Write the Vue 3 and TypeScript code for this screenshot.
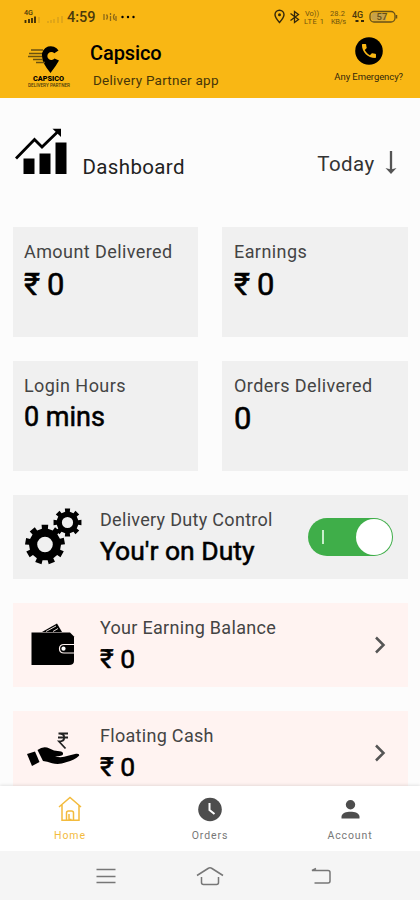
<script setup lang="ts">
interface Stat {
  label: string
  value: string
  kind: string
}

const stats: Stat[] = [
  { label: 'Amount Delivered', value: '₹ 0', kind: 'amount' },
  { label: 'Earnings', value: '₹ 0', kind: 'earnings' },
  { label: 'Login Hours', value: '0 mins', kind: 'login' },
  { label: 'Orders Delivered', value: '0', kind: 'orders' },
]

function gearPath(cx: number, cy: number, outer: number, inner: number, hole: number, teeth: number, phase: number): string {
  const step = (Math.PI * 2) / teeth
  const points: string[] = []
  for (let i = 0; i < teeth; i++) {
    const a = phase + i * step
    const corners: [number, number][] = [
      [inner, -0.27],
      [outer, -0.24],
      [outer, 0.24],
      [inner, 0.27],
    ]
    for (const [r, k] of corners) {
      const t = a + k * step
      points.push(`${(cx + r * Math.cos(t)).toFixed(2)} ${(cy + r * Math.sin(t)).toFixed(2)}`)
    }
  }
  return `M${points.join('L')}ZM${cx - hole} ${cy}a${hole} ${hole} 0 1 0 ${hole * 2} 0a${hole} ${hole} 0 1 0 ${-hole * 2} 0Z`
}

const bigGear = gearPath(21, 36.5, 20, 16, 7.8, 9, -0.18)
const smallGear = gearPath(43.5, 14.5, 14.2, 11, 5.6, 8, 0)
</script>

<template>
  <div class="screen">
    <header class="header">
      <div class="status">
        <div class="status-left">
          <svg class="signal" width="42" height="16" viewBox="0 0 42 16">
            <text x="0" y="6" class="tiny" textLength="9" lengthAdjust="spacingAndGlyphs">4G</text>
            <path d="M1.500 11v3M5 10v4M8 9v5M11 7.500v6.500" stroke="#3b2c08" stroke-width="1.800" />
            <path d="M15 8v6M24 12v2M27 11v3M30 10v4M34 8v6M38 7v7" stroke="#a98124" stroke-width="1" opacity=".6" />
          </svg>
          <span class="clock">4:59</span>
          <svg class="vibes" width="36" height="12" viewBox="0 0 36 12">
            <path d="M2 3v6M4.500 3.500q2 2.500 0 5M8.500 2v2M8.500 5v5M12.500 3q-2 3 0 6M14 5v5" stroke="#8c6818" stroke-width="1.300" fill="none" />
            <circle cx="20.500" cy="6" r="1.200" /><circle cx="26" cy="6" r="1.200" /><circle cx="31.500" cy="6" r="1.200" />
          </svg>
        </div>
        <svg class="status-right" width="126" height="18" viewBox="0 0 126 18">
          <path d="M6.500 14.500Q2 9.500 2 6.800a4.500 4.500 0 0 1 9 0Q11 9.500 6.500 14.500Z" fill="none" stroke="#33270b" stroke-width="1.400" />
          <circle cx="6.500" cy="6.700" r="1.500" fill="#33270b" />
          <path d="M17.500 5.500l8 6-4 3V3.500l4 3-8 6" fill="none" stroke="#33270b" stroke-width="1.300" />
          <text x="32" y="8" class="micro" textLength="14">Vo))</text>
          <text x="31" y="15.500" class="micro" textLength="20">LTE 1</text>
          <text x="57" y="8" class="micro" textLength="15">28.2</text>
          <text x="58" y="15.500" class="micro" textLength="15">KB/s</text>
          <text x="79" y="9.500" class="four">4G</text>
          <path d="M82.500 13h3M88 13h3" stroke="#33270b" stroke-width="1.800" />
          <rect x="97" y="3.500" width="25" height="10.500" rx="4" fill="none" stroke="#665018" stroke-width="1.300" />
          <path d="M100 5h13v7.500h-13q-2-1-2-3.700t2-3.800" fill="#c6a14a" />
          <path d="M123.500 7v3.500" stroke="#665018" stroke-width="1.500" />
          <text x="103.500" y="12" class="battery">57</text>
        </svg>
      </div>
      <div class="brand-row">
        <svg class="logo" width="44" height="43" viewBox="0 0 44 43">
          <path d="M22.500 28Q14 18 14 11A8.900 8.900 0 0 1 30.500 5.500L26.300 8.300A4 4 0 1 0 26.500 13.500L31 15.500Q28 21 22.500 28Z" />
          <path d="M3 5h12M1 8.500h13M0 11.500h14M5 14.500h10M8 17.500h9" stroke="#6b520f" stroke-width="1.300" />
          <text x="5" y="36.300" class="logo-name" textLength="31" lengthAdjust="spacingAndGlyphs">CAPSICO</text>
          <text x="0" y="41.500" class="logo-sub" textLength="42" lengthAdjust="spacingAndGlyphs">DELIVERY PARTNER</text>
        </svg>
        <div class="brand">
          <h1>Capsico</h1>
          <p>Delivery Partner app</p>
        </div>
        <div class="emergency">
          <svg width="28" height="28" viewBox="0 0 28 28">
            <circle cx="14" cy="14" r="13.800" />
            <path transform="translate(4.600 4.600) scale(.78)" fill="#f9b714" d="M6.620 10.790c1.440 2.830 3.760 5.140 6.590 6.590l2.200-2.200c.27-.27.67-.36 1.020-.24 1.120.37 2.330.57 3.570.57.550 0 1 .45 1 1V20c0 .55-.45 1-1 1C10.610 21 3 13.390 3 4c0-.55.45-1 1-1h3.500c.55 0 1 .45 1 1 0 1.250.2 2.450.57 3.570.11.350.03.740-.25 1.020z" />
          </svg>
          <span>Any Emergency?</span>
        </div>
      </div>
    </header>

    <main class="content">
      <section class="dash-head">
        <svg width="53" height="48" viewBox="0 0 53 48">
          <path d="M8.500 30.500h11V46h-11zM24.500 25.500h11V46h-11zM40.500 14.500H51.500V46h-11z" />
          <path d="M1 30.500L19.500 11.500l7.500 7.500L43 3.500" fill="none" stroke="#000" stroke-width="2.800" />
          <path d="M37.500 .8h8.500V9z" />
        </svg>
        <h2>Dashboard</h2>
        <div class="range">
          <span>Today</span>
          <svg width="12" height="24" viewBox="0 0 12 24">
            <path d="M6 0v20" stroke="#555" stroke-width="2.300" />
            <path d="M.5 17L6 18.500l5.500-1.500L6 23z" fill="#555" />
          </svg>
        </div>
      </section>

      <section class="stats">
        <article v-for="stat in stats" :key="stat.kind" class="stat" :class="stat.kind">
          <span class="label">{{ stat.label }}</span>
          <strong>{{ stat.value }}</strong>
        </article>
      </section>

      <section class="row duty">
        <svg class="row-icon" width="59" height="58" viewBox="0 0 59 58">
          <path :d="bigGear" fill-rule="evenodd" />
          <path :d="smallGear" fill-rule="evenodd" />
        </svg>
        <div class="row-text">
          <span class="label">Delivery Duty Control</span>
          <strong>You'r on Duty</strong>
        </div>
        <div class="toggle"><i></i><b></b></div>
      </section>

      <section class="row money">
        <svg class="row-icon" width="59" height="58" viewBox="0 0 59 58">
          <path d="M18 16l15-8.500 5 8.500z" />
          <path d="M22 15.500l10-5.500M29 15.500l5-3" stroke="#fff3f1" stroke-width=".9" />
          <path d="M7.500 16.500H46l4 4V45q0 4-5 4H7.500z" />
          <path d="M50 28.500H40q-4.500 0-4.500 4.200t4.500 4.300h10" fill="#000" stroke="#fff3f1" stroke-width="1.200" />
          <circle cx="39.500" cy="32.700" r="2.100" fill="#fff" />
        </svg>
        <div class="row-text">
          <span class="label">Your Earning Balance</span>
          <strong>₹ 0</strong>
        </div>
        <svg class="chevron" width="12" height="18" viewBox="0 0 12 18"><path d="M2 1.500L9.500 9 2 16.500" /></svg>
      </section>

      <section class="row money cash">
        <svg class="row-icon" width="59" height="58" viewBox="0 0 59 58">
          <path d="M3 30l8-2.500 4.500 10.500-7.500 4z" />
          <path d="M13.500 26q6-4.500 12-1.500 4 2.500 10 2.800 4 .3 3.500 3-.5 2-8 2 6 2 13-.5l8-2q4-.3 3 2-4 4-13 6.500-7 3-14 1-5-2-9-2.200z" />
          <path d="M34.500 9.500h9.500M34 13.500h10M35 9.500c7 0 7 8 0 8l6.500 7" fill="none" stroke="#222" stroke-width="1.800" />
        </svg>
        <div class="row-text">
          <span class="label">Floating Cash</span>
          <strong>₹ 0</strong>
        </div>
        <svg class="chevron" width="12" height="18" viewBox="0 0 12 18"><path d="M2 1.500L9.500 9 2 16.500" /></svg>
      </section>
    </main>

    <nav class="tabs">
      <a class="tab active">
        <svg width="26" height="26" viewBox="0 0 26 26" fill="none" stroke="#f3bb3d" stroke-width="1.500">
          <path d="M2 11L13 1.500 24 11M5 9v15.200h16.500M22 9v16M9.500 24v-7q0-2 2-2h3q2 0 2 2v7M12 18v5.500h2.500" />
        </svg>
        <span>Home</span>
      </a>
      <a class="tab">
        <svg width="26" height="26" viewBox="0 0 26 26">
          <circle cx="13" cy="13.500" r="11.800" fill="#4d4d4d" />
          <path d="M12.500 7v7l5 4" fill="none" stroke="#fff" stroke-width="2" />
        </svg>
        <span>Orders</span>
      </a>
      <a class="tab">
        <svg width="26" height="26" viewBox="0 0 26 26" fill="#4d4d4d">
          <circle cx="13.500" cy="8.800" r="4.700" />
          <path d="M4.500 22.500v-1.800c0-3.700 5-5 9-5s9 1.300 9 5v1.800z" />
        </svg>
        <span>Account</span>
      </a>
    </nav>

    <footer class="system">
      <svg width="20" height="20" viewBox="0 0 20 20"><path d="M.5 3.500h19M.5 10.500h19M.5 16.500h19" /></svg>
      <svg class="sys-home" width="28" height="20" viewBox="0 0 28 20"><path d="M1 9.500L12 2.500q2-1.300 4 0l11 7M5.500 11v5.500q0 2 2 2h13q2 0 2-2V11" /></svg>
      <svg width="20" height="20" viewBox="0 0 20 20"><path d="M1 4.500H17q2 0 2 2v8.500q0 2-2 2H3.500M5 2.500L1 4.500h4" /></svg>
    </footer>
  </div>
</template>

<style>
body {
  margin: 0;
}
</style>

<style scoped>
.screen {
  width: 420px;
  height: 900px;
  display: flex;
  flex-direction: column;
  overflow: hidden;
  background: #fcfcfc;
  color: #000;
  font-family: Roboto, "Liberation Sans", sans-serif;
}
svg {
  display: block;
  flex: none;
}
h1, h2, p {
  margin: 0;
  white-space: nowrap;
}
.header {
  height: 98px;
  flex: none;
  background: #f9b714;
}
.status {
  height: 34px;
  box-sizing: border-box;
  padding: 8px 21px 0 24px;
  display: flex;
  justify-content: space-between;
}
.status-left {
  display: flex;
}
.signal {
  margin-top: 1px;
}
.tiny {
  font-size: 6.5px;
  font-weight: 500;
  fill: #4b390c;
}
.clock {
  width: 34px;
  margin-left: 1px;
  font-size: 14.5px;
  line-height: 20px;
  font-weight: 500;
  color: #4b390c;
}
.vibes {
  margin: 3px 0 0 1px;
}
.micro {
  font-size: 7.5px;
  fill: #70530e;
}
.four {
  font-size: 9px;
  font-weight: 500;
  fill: #4b390c;
}
.battery {
  font-size: 9.5px;
  font-weight: 500;
  fill: #665018;
}
.brand-row {
  display: flex;
  padding: 10px 17px 0 28px;
}
.logo {
  margin-top: 1px;
}
.logo-name {
  font-size: 7px;
  font-weight: 900;
}
.logo-sub {
  font-size: 4.5px;
  font-weight: 500;
  fill: #4b390c;
}
.brand {
  padding-left: 18px;
}
h1 {
  font-size: 20px;
  font-weight: 500;
  line-height: 24px;
  margin-top: -3px;
  letter-spacing: -.1px;
}
.brand p {
  margin: 6px 0 0 3px;
  font-size: 13.5px;
  line-height: 18px;
  color: #463509;
  letter-spacing: .25px;
}
.emergency {
  margin: -7px 0 0 auto;
  display: flex;
  flex-direction: column;
  align-items: center;
  gap: 6px;
}
.emergency span {
  font-size: 9.5px;
  line-height: 12px;
  letter-spacing: -.08px;
  color: #33270b;
}
.content {
  flex: 1;
  min-height: 0;
  overflow: hidden;
  padding: 0 12px 0 13px;
}
.dash-head {
  height: 129px;
  box-sizing: border-box;
  padding: 30px 11px 0 2px;
  display: flex;
}
h2 {
  margin: 26px 0 0 14.5px;
  font-size: 20.5px;
  line-height: 26px;
  font-weight: 400;
  letter-spacing: .35px;
  color: #222;
}
.range {
  margin: 23px 0 0 auto;
  display: flex;
  gap: 10.5px;
  font-size: 20.5px;
  line-height: 26px;
  letter-spacing: .4px;
  color: #333;
}
.stats {
  display: grid;
  grid-template-columns: 185px 186px;
  grid-auto-rows: 110px;
  gap: 24px;
}
.stat {
  box-sizing: border-box;
  padding: 13px 11px 0;
  background: #f0f0f0;
}
.stat:nth-child(even) {
  padding-left: 12px;
}
.label {
  display: block;
  font-size: 18px;
  line-height: 24px;
  letter-spacing: .42px;
  color: #444;
  white-space: nowrap;
}
strong {
  display: block;
  font-size: 31px;
  line-height: 42px;
  font-weight: 400;
  white-space: nowrap;
  letter-spacing: -.4px;
  -webkit-text-stroke: .55px #000;
}
.login strong {
  font-size: 27px;
  line-height: 38px;
  letter-spacing: 0;
}
.row {
  display: flex;
  box-sizing: border-box;
  height: 84px;
  margin-top: 24px;
  padding: 13px 15px 0 11px;
}
.duty {
  background: #f0f0f0;
}
.money {
  background: #fff3f1;
}
.row-text {
  margin-left: 17px;
}
.row .label {
  letter-spacing: .3px;
}
.row strong {
  font-size: 26.5px;
  line-height: 37px;
  letter-spacing: 0;
}
.toggle {
  margin: 10px 0 0 auto;
  width: 85px;
  height: 38px;
  box-sizing: border-box;
  padding: 1px 1px 1px 14px;
  display: flex;
  justify-content: space-between;
  align-items: center;
  border-radius: 19px;
  background: #3fae49;
}
.toggle i {
  width: 1.5px;
  height: 14px;
  background: #c8efcb;
}
.toggle b {
  width: 36px;
  height: 36px;
  border-radius: 50%;
  background: #fff;
}
.chevron {
  margin: 20px 7px 0 auto;
  fill: none;
  stroke: #555;
  stroke-width: 2.5;
}
.tabs {
  height: 65px;
  flex: none;
  display: grid;
  grid-template-columns: repeat(3, 1fr);
  background: #fff;
  box-shadow: 0 -1px 3px rgba(0, 0, 0, .1);
}
.tab {
  display: flex;
  flex-direction: column;
  align-items: center;
  padding-top: 10px;
  gap: 7px;
  font-size: 10.5px;
  line-height: 14px;
  letter-spacing: .9px;
  color: #777;
}
.active {
  color: #f3bb3d;
}
.system {
  height: 49px;
  flex: none;
  box-sizing: border-box;
  padding: 15px 89px 0 96px;
  display: flex;
  justify-content: space-between;
  background: #f5f5f5;
}
.system svg {
  fill: none;
  stroke: #777;
  stroke-width: 1.5;
}
.system .sys-home {
  margin-right: 7px;
}
</style>
